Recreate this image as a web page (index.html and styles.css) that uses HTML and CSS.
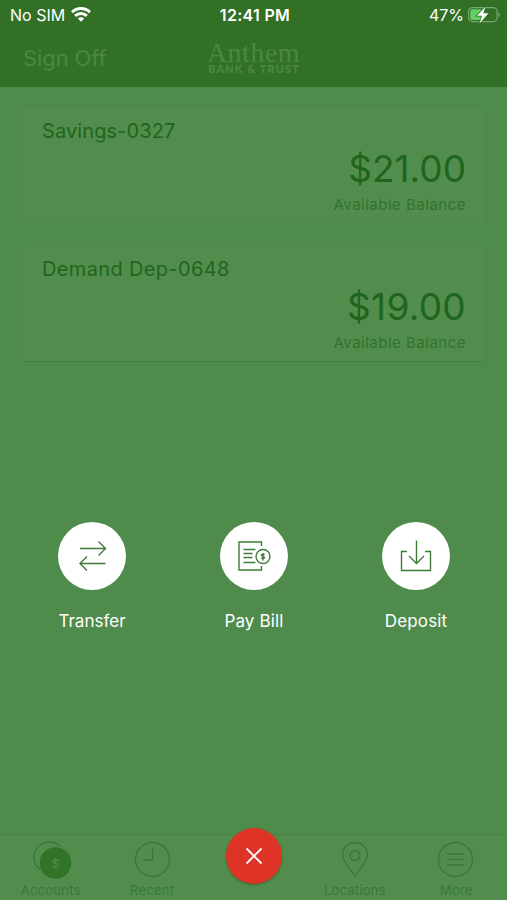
FILE: index.html
```
<!DOCTYPE html>
<html lang="en">
<head>
    <meta charset="UTF-8">
    <meta name="viewport" content="width=device-width, initial-scale=1.0">
    <title>Anthem Bank &amp; Trust</title>
    <link rel="stylesheet" href="styles.css">
</head>
<body>
    <div class="app">
        <header class="header">
            <div class="status-bar">
                <div class="status-left">
                    <span class="carrier">No SIM</span>
                    <svg class="wifi" width="20" height="15" viewBox="0 0 20 15">
                        <g fill="none" stroke="#fff" stroke-width="3">
                            <path d="M1 5.300a12.800 12.800 0 0 1 18 0"/>
                            <path d="M4.200 8.900a8.300 8.300 0 0 1 11.600 0"/>
                        </g>
                        <path d="M10 14.800l-3.200-3.300a4.600 4.600 0 0 1 6.400 0z" fill="#fff"/>
                    </svg>
                </div>
                <div class="clock">12:41 PM</div>
                <div class="status-right">
                    <span class="percent">47%</span>
                    <svg class="battery" width="33" height="18" viewBox="0 0 33 18">
                        <rect x="1.600" y="1.600" width="28.500" height="14" rx="4" fill="none" stroke="#7aa873" stroke-width="1.200"/>
                        <path d="M31.500 6.300c1.800.8 1.800 3.900 0 4.700z" fill="#7aa873"/>
                        <path d="M5.300 3.300H14v10.600H5.300a2 2 0 0 1-2-2V5.300a2 2 0 0 1 2-2z" fill="#65cf67"/>
                        <path d="M18.500 .5L10 9.700h5l-2.500 7.800L21.500 7.300h-5.200z" fill="#fff" stroke="#317025" stroke-width="1.600" paint-order="stroke"/>
                    </svg>
                </div>
            </div>
            <div class="nav-bar">
                <a class="sign-off">Sign Off</a>
                <div class="logo">
                    <div class="logo-name">Anthem</div>
                    <div class="logo-sub">BANK &amp; TRUST</div>
                </div>
            </div>
        </header>

        <main class="accounts">
            <section class="card">
                <div class="card-name">Savings-0327</div>
                <div class="card-amount">$21.00</div>
                <div class="card-label">Available Balance</div>
            </section>
            <section class="card">
                <div class="card-name demand">Demand Dep-0648</div>
                <div class="card-amount nineteen">$19.00</div>
                <div class="card-label">Available Balance</div>
            </section>
        </main>

        <div class="actions">
            <div class="action">
                <div class="action-icon">
                    <svg width="34" height="34" viewBox="0 0 34 34">
                        <path d="M5 9.500h25.500M23.500 2.500l7 7-7 7M30.500 24.500H5M12 17.500l-7 7 7 7"/>
                    </svg>
                </div>
                <span class="action-label transfer">Transfer</span>
            </div>
            <div class="action">
                <div class="action-icon">
                    <svg width="34" height="34" viewBox="0 0 34 34">
                        <path d="M24.500 7V3H2v28h22.500v-4"/>
                        <path d="M6.500 10.500h12M6.500 14.500h9M6.500 18.500h9M6.500 23.500h12"/>
                        <circle cx="26" cy="17.500" r="7"/>
                        <path d="M27.500 15.900c-.4-.8-3-.9-3 .4 0 1.400 3 .8 3 2.300 0 1.300-2.700 1.300-3.200.3M26 14v7.500"/>
                    </svg>
                </div>
                <span class="action-label">Pay Bill</span>
            </div>
            <div class="action">
                <div class="action-icon">
                    <svg width="34" height="34" viewBox="0 0 34 34">
                        <path d="M8 12.500H2.500v19h29v-19H26M17.500 1.500v23M10 17l7.500 7.500 7.500-7.500"/>
                    </svg>
                </div>
                <span class="action-label">Deposit</span>
            </div>
        </div>

        <nav class="tab-bar">
            <div class="tab">
                <svg width="42" height="42" viewBox="0 0 42 42">
                    <path d="M10.500 31A15.500 15.500 0 1 1 30.500 7.500"/>
                    <circle class="coin" cx="25.500" cy="24" r="15.800"/>
                    <text class="coin-sign" x="25.500" y="28.500" text-anchor="middle">$</text>
                </svg>
                <span class="tab-label">Accounts</span>
            </div>
            <div class="tab">
                <svg width="42" height="42" viewBox="0 0 42 42">
                    <circle cx="21.500" cy="20.500" r="17"/>
                    <path d="M21.500 8.500v12.500h-9"/>
                </svg>
                <span class="tab-label">Recent</span>
            </div>
            <button class="close-button" aria-label="Close">
                <svg width="18" height="18" viewBox="0 0 18 18">
                    <path d="M1.500 1.500l15 15M16.500 1.500l-15 15"/>
                </svg>
            </button>
            <div class="tab">
                <svg width="42" height="42" viewBox="0 0 42 42">
                    <path d="M21 37.500C18 31 8.500 23 8.500 15.500a12.500 12 0 0 1 25 0C33.500 23 24 31 21 37.500z"/>
                    <circle cx="21" cy="16.500" r="5"/>
                </svg>
                <span class="tab-label">Locations</span>
            </div>
            <div class="tab">
                <svg width="42" height="42" viewBox="0 0 42 42">
                    <circle cx="20.500" cy="20.500" r="17"/>
                    <path d="M12 15h17M12 20.500h17M12 26h17"/>
                </svg>
                <span class="tab-label">More</span>
            </div>
        </nav>
    </div>
</body>
</html>
```

FILE: styles.css
```
* {
    margin: 0;
    padding: 0;
    box-sizing: border-box;
}

body {
    font-family: Inter, Roboto, "Liberation Sans", sans-serif;
    background: #4f8c4c;
    color: #fff;
}

.app {
    display: flex;
    flex-direction: column;
    height: 900px;
    overflow: hidden;
}

.header {
    height: 87px;
    background: #317025;
}

.status-bar {
    display: grid;
    grid-template-columns: 1fr auto 1fr;
    align-items: center;
    height: 30px;
    padding: 0 7px 0 10px;
    font-size: 16px;
    line-height: 30px;
}

.status-left,
.status-right {
    display: flex;
    align-items: center;
    gap: 6px;
}

.status-right {
    justify-content: flex-end;
    gap: 3px;
}

.wifi,
.battery {
    margin-top: -1px;
}

.clock {
    font-weight: 600;
    letter-spacing: 0.3px;
}

.nav-bar {
    display: grid;
    grid-template-columns: 1fr auto 1fr;
    align-items: center;
    height: 57px;
    padding: 0 23px;
    color: #4a8841;
}

.sign-off {
    font-size: 22px;
    line-height: 26px;
    letter-spacing: -0.1px;
    margin-top: -2px;
}

.logo {
    text-align: center;
}

.logo-name {
    font-family: "Liberation Serif", serif;
    font-size: 28px;
    line-height: 20px;
    letter-spacing: 0.5px;
}

.logo-sub {
    font-family: Lato, sans-serif;
    font-size: 11px;
    font-weight: 900;
    line-height: 12px;
    letter-spacing: 1.1px;
    margin: 0 -5px 0 -4px;
}

.accounts {
    display: flex;
    flex-direction: column;
    gap: 23px;
    height: 436px;
    padding: 21px 23px 0;
}

.card {
    display: flex;
    flex-direction: column;
    height: 115px;
    padding: 11px 18px 0 19px;
    background: #528d4d;
    box-shadow: 0 0 4px rgba(49, 112, 37, 0.12);
    color: #20651d;
}

.card:last-child {
    height: 116px;
    border-bottom: 1px solid #45833f;
}

.card-name {
    font-size: 20px;
    line-height: 24px;
    letter-spacing: 0.1px;
}

.card-name.demand {
    letter-spacing: 0.35px;
}

.card-amount {
    align-self: flex-end;
    font-size: 37px;
    line-height: 46px;
    margin-top: 3px;
}

.card-amount.nineteen {
    letter-spacing: 0.3px;
}

.card-label {
    align-self: flex-end;
    font-size: 15px;
    line-height: 20px;
    letter-spacing: 0.5px;
    margin-top: 3px;
    color: #327331;
}

.actions {
    display: grid;
    grid-template-columns: repeat(3, 1fr);
    padding: 0 10px 0 11px;
}

.action {
    display: flex;
    flex-direction: column;
    align-items: center;
    gap: 18px;
}

.action-icon {
    display: flex;
    align-items: center;
    justify-content: center;
    width: 68px;
    height: 68px;
    margin-top: -1px;
    border-radius: 50%;
    background: #fff;
}

.action-icon svg {
    fill: none;
    stroke: #3f7b38;
    stroke-width: 1.4;
}

.action-label {
    font-size: 17px;
    line-height: 26px;
    letter-spacing: 0.15px;
}

.action-label.transfer {
    letter-spacing: 0;
}

.tab-bar {
    display: grid;
    grid-template-columns: repeat(5, 1fr);
    height: 66px;
    margin-top: auto;
    border-top: 1px solid #488546;
    background: #528d4d;
}

.tab {
    display: flex;
    flex-direction: column;
    align-items: center;
    padding-top: 4px;
    color: #38783a;
}

.tab svg {
    fill: none;
    stroke: #38783a;
    stroke-width: 1.3;
}

.tab .coin {
    fill: #317327;
    stroke: none;
}

.tab .coin-sign {
    fill: #528d4d;
    stroke: none;
    font-size: 12px;
}

.tab-label {
    font-size: 13px;
    line-height: 18px;
    letter-spacing: 0.25px;
}

.close-button {
    display: flex;
    align-items: center;
    justify-content: center;
    justify-self: center;
    width: 56px;
    height: 56px;
    margin: -7px 0 0 1px;
    border: none;
    border-radius: 50%;
    background: #df3328;
    box-shadow: 0 1px 2px rgba(30, 70, 20, 0.5);
}

.close-button svg {
    fill: none;
    stroke: #fff;
    stroke-width: 1.8;
}
```
